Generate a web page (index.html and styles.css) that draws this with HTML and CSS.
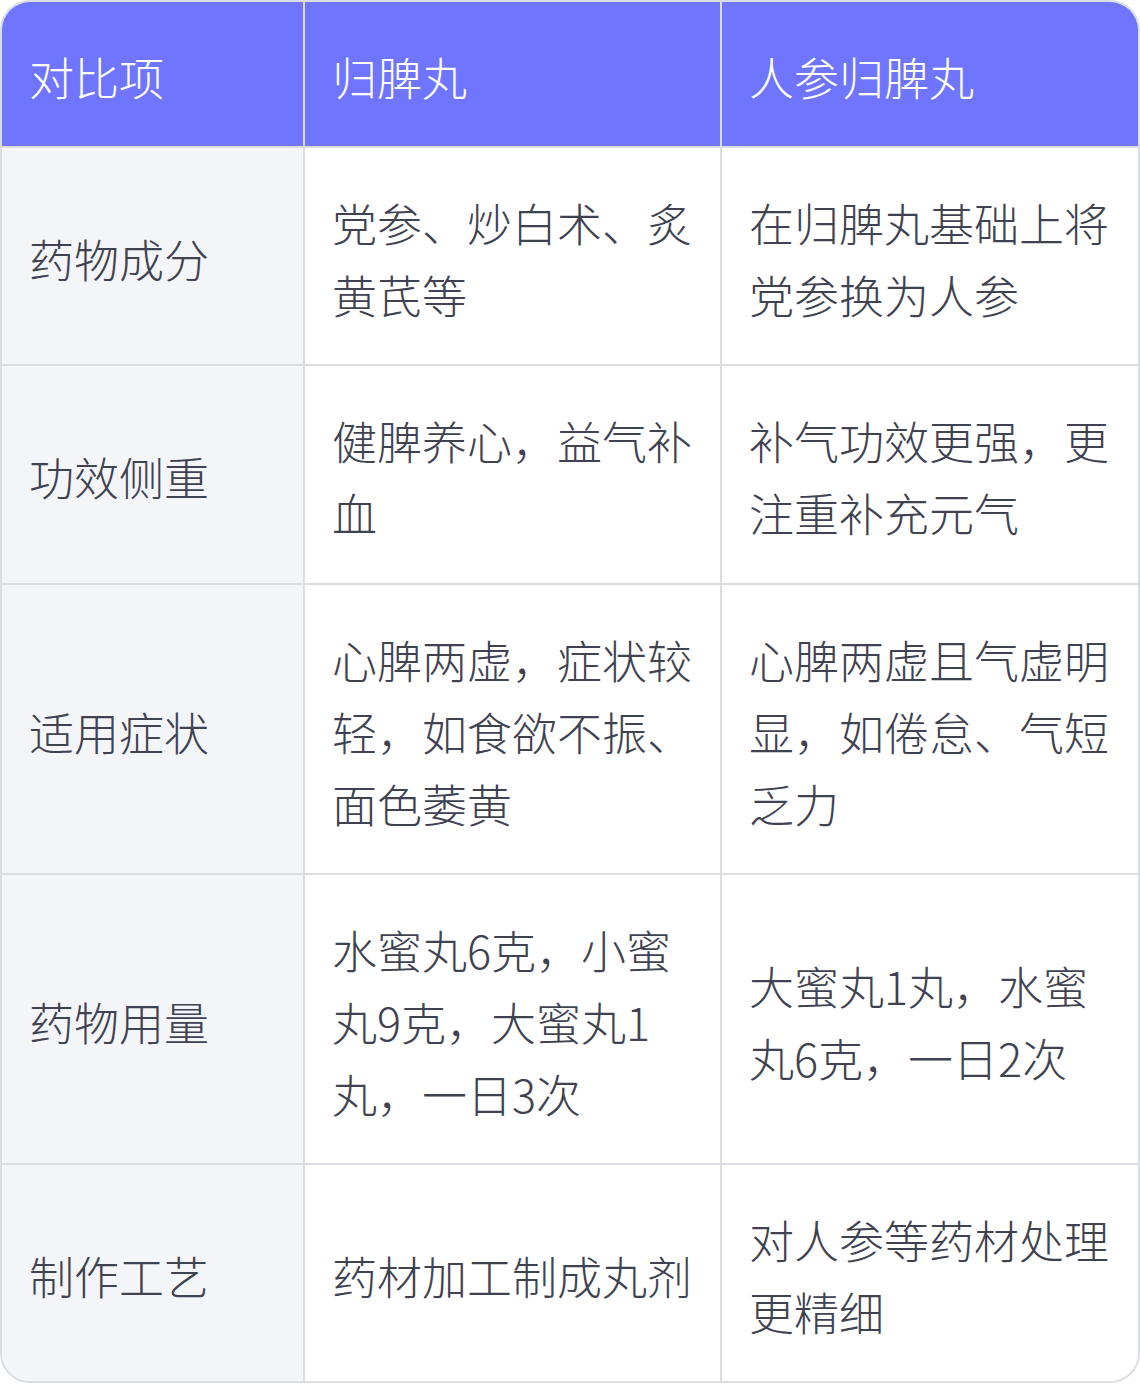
FILE: index.html
```html
<!DOCTYPE html>
<html lang="zh-CN">
<head>
<meta charset="utf-8">
<title>归脾丸对比</title>
<link rel="stylesheet" href="styles.css">
</head>
<body>
<div class="wrap">
  <table class="cmp">
    <colgroup>
      <col class="c1">
      <col class="c2">
      <col class="c3">
    </colgroup>
    <thead>
      <tr>
        <th>对比项</th>
        <th>归脾丸</th>
        <th>人参归脾丸</th>
      </tr>
    </thead>
    <tbody>
      <tr>
        <td class="key">药物成分</td>
        <td>党参、炒白术、炙黄芪等</td>
        <td>在归脾丸基础上将党参换为人参</td>
      </tr>
      <tr>
        <td class="key">功效侧重</td>
        <td>健脾养心，益气补血</td>
        <td>补气功效更强，更注重补充元气</td>
      </tr>
      <tr>
        <td class="key">适用症状</td>
        <td>心脾两虚，症状较轻，如食欲不振、面色萎黄</td>
        <td>心脾两虚且气虚明显，如倦怠、气短乏力</td>
      </tr>
      <tr>
        <td class="key">药物用量</td>
        <td>水蜜丸6克，小蜜丸9克，大蜜丸1丸，一日3次</td>
        <td>大蜜丸1丸，水蜜丸6克，一日2次</td>
      </tr>
      <tr>
        <td class="key">制作工艺</td>
        <td>药材加工制成丸剂</td>
        <td>对人参等药材处理更精细</td>
      </tr>
    </tbody>
  </table>
</div>
</body>
</html>
```

FILE: styles.css
```css
html, body {
  margin: 0;
  padding: 0;
  background: #ffffff;
}

.wrap {
  width: 1140px;
  box-sizing: border-box;
  border: 2px solid #dcdde3;
  border-radius: 30px;
  overflow: hidden;
}

.cmp {
  width: 100%;
  border-collapse: collapse;
  table-layout: fixed;
  font-family: "Noto Sans CJK SC", "Noto Sans", sans-serif;
  font-weight: 300;
  font-size: 45px;
  line-height: 72px;
  color: #3f4250;
}

.c1 { width: 302px; }
.c2 { width: 417px; }
.c3 { width: 417px; }

.cmp th,
.cmp td {
  padding: 39px 22px 33px 27px;
  text-align: left;
  vertical-align: middle;
  border: 2px solid #dcdde3;
  font-weight: 300;
}

.cmp tbody td {
  padding-top: 39px;
  padding-bottom: 33.3px;
}

.cmp tr > :first-child { border-left: none; }
.cmp tr > :last-child { border-right: none; }
.cmp thead th { border-top: none; }
.cmp tbody tr:last-child td { border-bottom: none; }

.cmp th {
  background: #6f75ff;
  color: #ffffff;
}

.cmp td.key {
  background: #f4f5f9;
}

.cmp td {
  background: #ffffff;
}
```
